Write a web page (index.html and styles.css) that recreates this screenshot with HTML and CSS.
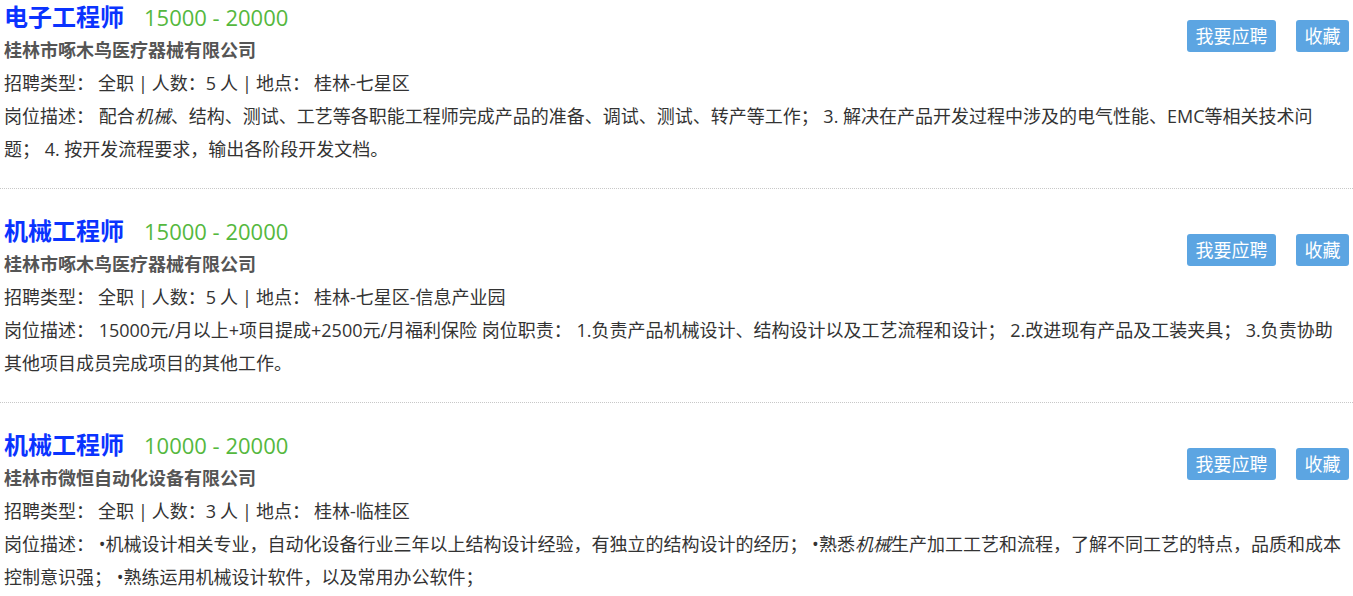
FILE: index.html
```html
<!DOCTYPE html>
<html lang="zh-CN">
<head>
<meta charset="utf-8">
<title>职位列表</title>
<link rel="stylesheet" href="styles.css">
</head>
<body>
<div class="job-list">
  <div class="job">
    <div class="job-head">
      <div class="job-info">
        <div class="job-title"><a class="job-name">电子工程师</a><span class="salary">15000 - 20000</span></div>
        <div class="company">桂林市啄木鸟医疗器械有限公司</div>
        <div class="meta">招聘类型： 全职 | 人数：5 人 | 地点： 桂林-七星区</div>
      </div>
      <div class="actions">
        <a class="btn">我要应聘</a>
        <a class="btn">收藏</a>
      </div>
    </div>
    <div class="desc">岗位描述： 配合<em>机械</em>、结构、测试、工艺等各职能工程师完成产品的准备、调试、测试、转产等工作； 3. 解决在产品开发过程中涉及的电气性能、EMC等相关技术问<br>题； 4. 按开发流程要求，输出各阶段开发文档。</div>
  </div>
  <div class="job">
    <div class="job-head">
      <div class="job-info">
        <div class="job-title"><a class="job-name">机械工程师</a><span class="salary">15000 - 20000</span></div>
        <div class="company">桂林市啄木鸟医疗器械有限公司</div>
        <div class="meta">招聘类型： 全职 | 人数：5 人 | 地点： 桂林-七星区-信息产业园</div>
      </div>
      <div class="actions">
        <a class="btn">我要应聘</a>
        <a class="btn">收藏</a>
      </div>
    </div>
    <div class="desc">岗位描述： 15000元/月以上+项目提成+2500元/月福利保险 岗位职责： 1.负责产品机械设计、结构设计以及工艺流程和设计； 2.改进现有产品及工装夹具； 3.负责协助其他项目成员完成项目的其他工作。</div>
  </div>
  <div class="job">
    <div class="job-head">
      <div class="job-info">
        <div class="job-title"><a class="job-name">机械工程师</a><span class="salary">10000 - 20000</span></div>
        <div class="company">桂林市微恒自动化设备有限公司</div>
        <div class="meta">招聘类型： 全职 | 人数：3 人 | 地点： 桂林-临桂区</div>
      </div>
      <div class="actions">
        <a class="btn">我要应聘</a>
        <a class="btn">收藏</a>
      </div>
    </div>
    <div class="desc">岗位描述： •机械设计相关专业，自动化设备行业三年以上结构设计经验，有独立的结构设计的经历； •熟悉<em>机械</em>生产加工工艺和流程，了解不同工艺的特点，品质和成本控制意识强； •熟练运用机械设计软件，以及常用办公软件；</div>
  </div>
</div>
</body>
</html>
```

FILE: styles.css
```css
html, body {
  margin: 0;
  padding: 0;
  background: #fff;
}

body {
  font-family: "Open Sans", "Noto Sans CJK SC", sans-serif;
  font-size: 18px;
  color: #333;
}

.job {
  padding: 0 4px 22px 4px;
  border-bottom: 1px dotted #c8c8c8;
  margin-bottom: 25px;
}

.job-head {
  display: flex;
  justify-content: space-between;
  align-items: flex-start;
}

.job-title {
  height: 34px;
  line-height: 33px;
  white-space: nowrap;
}

.job-name {
  font-size: 24px;
  font-weight: bold;
  color: #0a33ff;
}

.salary {
  font-size: 22px;
  color: #55b83e;
  margin-left: 20px;
}

.company {
  line-height: 33px;
  font-weight: bold;
  color: #555;
}

.meta {
  line-height: 33px;
  word-spacing: -0.7px;
}

.actions {
  display: flex;
  gap: 20px;
  margin-top: 20px;
}

.btn {
  display: block;
  height: 32px;
  line-height: 32px;
  padding: 0 8.5px;
  background: #5ca5e2;
  color: #fff;
  border-radius: 3px;
  font-size: 18px;
}

.desc {
  line-height: 33px;
}

.desc em {
  font-style: italic;
}
```
